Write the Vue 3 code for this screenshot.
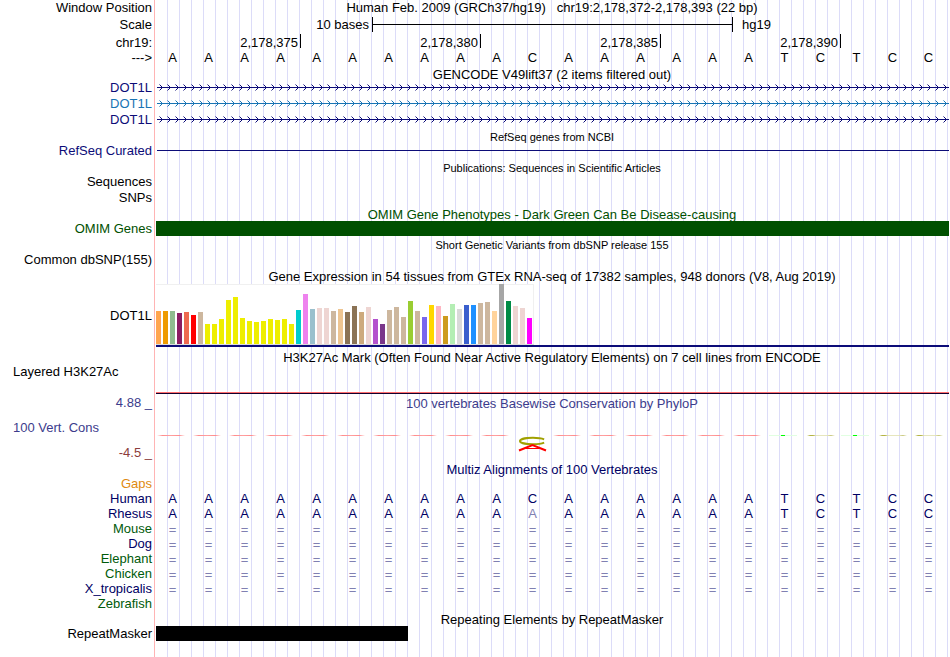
<script setup>
const bases = 'AAAAAAAAAACAAAAAATCTCC'.split('');
const rhesus = 'AAAAAAAAAAAAAAAAATCTCC'.split('');

const ticks = ['2,178,375', '2,178,380', '2,178,385', '2,178,390'];

const transcripts = [
    { name: 'DOT1L', color: 'navy' },
    { name: 'DOT1L', color: 'blue' },
    { name: 'DOT1L', color: 'navy' }
];

// one bar per GTEx tissue: [height, color]
const tissues = [
    [33, '#ffa54f'], [33, '#ee9a00'], [33, '#8fbc8f'], [31, '#8b1c62'], [32, '#ee6a50'], [29, '#ff0000'],
    [32, '#cdb79e'], [20, '#eeee00'], [20, '#eeee00'], [25, '#eeee00'], [44, '#eeee00'], [47, '#eeee00'],
    [26, '#eeee00'], [23, '#eeee00'], [22, '#eeee00'], [23, '#eeee00'], [25, '#eeee00'], [24, '#eeee00'],
    [25, '#eeee00'], [20, '#eeee00'], [34, '#00cdcd'], [50, '#ee82ee'], [35, '#9ac0cd'], [36, '#eed5d2'],
    [36, '#eed5d2'], [33, '#cdb79e'], [35, '#eec591'], [32, '#8b7355'], [38, '#8b7355'], [32, '#cdaa7d'],
    [37, '#eed5d2'], [25, '#b452cd'], [20, '#7a378b'], [34, '#cdb79e'], [37, '#cdb79e'], [27, '#cdb79e'],
    [43, '#9acd32'], [33, '#cdb79e'], [27, '#7a67ee'], [39, '#ffd700'], [38, '#ffb6c1'], [28, '#cd9b1d'],
    [40, '#b4eeb4'], [35, '#d9d9d9'], [39, '#3a5fcd'], [39, '#1e90ff'], [41, '#cdb79e'], [42, '#cdb79e'],
    [33, '#ffd39b'], [60, '#a6a6a6'], [43, '#008b45'], [38, '#eed5d2'], [36, '#eed5d2'], [26, '#ff00ff']
];

const species = [
    { name: 'Gaps', color: 'orange', seq: [] },
    { name: 'Human', color: 'darkblue', seq: bases },
    { name: 'Rhesus', color: 'darkblue', seq: rhesus },
    { name: 'Mouse', color: 'green', seq: bases.map(() => '=') },
    { name: 'Dog', color: 'darkblue', seq: bases.map(() => '=') },
    { name: 'Elephant', color: 'green', seq: bases.map(() => '=') },
    { name: 'Chicken', color: 'green', seq: bases.map(() => '=') },
    { name: 'X_tropicalis', color: 'darkblue', seq: bases.map(() => '=') },
    { name: 'Zebrafish', color: 'green', seq: [] }
];
</script>

<template>
    <main class="browser">
        <div class="row">
            <div class="label">Window Position</div>
            <div class="plot title top">Human Feb. 2009 (GRCh37/hg19) &nbsp; chr19:2,178,372-2,178,393 (22 bp)</div>
        </div>
        <div class="row scaleRow">
            <div class="label">Scale</div>
            <div class="plot cells">
                <span class="scaleText">10 bases</span>
                <span class="scaleBar"></span>
                <span class="assembly">hg19</span>
            </div>
        </div>
        <div class="row ruler">
            <div class="label">chr19:</div>
            <div class="plot cells">
                <span v-for="(tick, i) in ticks" :key="tick" class="tick" :class="{ first: i === 0 }">{{ tick }}</span>
            </div>
        </div>
        <div class="row">
            <div class="label">---&gt;</div>
            <div class="plot cells bases">
                <span v-for="(base, i) in bases" :key="i">{{ base }}</span>
            </div>
        </div>

        <div class="row short">
            <div class="label"></div>
            <div class="plot title">GENCODE V49lift37 (2 items filtered out)</div>
        </div>
        <div class="row" v-for="(item, i) in transcripts" :key="i" :class="item.color">
            <div class="label">{{ item.name }}</div>
            <div class="plot">
                <svg class="arrows" width="100%" height="16">
                    <defs>
                        <pattern :id="'chevron' + i" width="8" height="16" patternUnits="userSpaceOnUse">
                            <path d="M3.5 4.5l3 3l-3 3" fill="none" stroke="currentColor" stroke-width="1" />
                        </pattern>
                    </defs>
                    <rect x="1" y="7" width="100%" height="1" fill="currentColor" />
                    <rect x="1" width="100%" height="16" :fill="'url(#chevron' + i + ')'" />
                </svg>
            </div>
        </div>

        <div class="row medium">
            <div class="label"></div>
            <div class="plot title small">RefSeq genes from NCBI</div>
        </div>
        <div class="row navy">
            <div class="label">RefSeq Curated</div>
            <div class="plot"><div class="thinLine"></div></div>
        </div>

        <div class="row medium">
            <div class="label"></div>
            <div class="plot title small">Publications: Sequences in Scientific Articles</div>
        </div>
        <div class="row">
            <div class="label">Sequences</div>
            <div class="plot"></div>
        </div>
        <div class="row">
            <div class="label">SNPs</div>
            <div class="plot"></div>
        </div>

        <div class="row medium omim">
            <div class="label"></div>
            <div class="plot title">OMIM Gene Phenotypes - Dark Green Can Be Disease-causing</div>
        </div>
        <div class="row medium omim">
            <div class="label">OMIM Genes</div>
            <div class="plot"><div class="block"></div></div>
        </div>

        <div class="row tall">
            <div class="label"></div>
            <div class="plot title small">Short Genetic Variants from dbSNP release 155</div>
        </div>
        <div class="row">
            <div class="label">Common dbSNP(155)</div>
            <div class="plot"></div>
        </div>

        <div class="row medium">
            <div class="label"></div>
            <div class="plot title">Gene Expression in 54 tissues from GTEx RNA-seq of 17382 samples, 948 donors (V8, Aug 2019)</div>
        </div>
        <div class="row gtex">
            <div class="label">DOT1L</div>
            <div class="plot">
                <div class="bars">
                    <i v-for="(t, i) in tissues" :key="i" :style="{ height: t[0] + 'px', backgroundColor: t[1] }"></i>
                </div>
                <div class="geneModel"></div>
            </div>
        </div>

        <div class="row medium">
            <div class="label"></div>
            <div class="plot title top">H3K27Ac Mark (Often Found Near Active Regulatory Elements) on 7 cell lines from ENCODE</div>
        </div>
        <div class="row layered">
            <div class="label left">Layered H3K27Ac</div>
            <div class="plot"><div class="signal"></div></div>
        </div>

        <div class="row phylop">
            <div class="label">4.88 _</div>
            <div class="plot title">100 vertebrates Basewise Conservation by PhyloP</div>
        </div>
        <div class="row phylop cons">
            <div class="label consLabel">
                <span>100 Vert. Cons</span>
                <span class="min">-4.5 _</span>
            </div>
            <div class="plot cells">
                <template v-for="(base, i) in bases" :key="i">
                    <svg v-if="i === 10" class="logo" width="36" height="20" viewBox="0 0 36 20" fill="none">
                        <ellipse cx="17" cy="7" rx="13" ry="3.3" pathLength="100" stroke="#a0a000" stroke-width="2" stroke-dasharray="90 10" stroke-dashoffset="-5" />
                        <polyline points="3,16.5 16.5,11 30,16.5" stroke="#ff0000" stroke-width="2" />
                        <line x1="10" y1="14.5" x2="23" y2="14.5" stroke="#ff0000" />
                    </svg>
                    <span v-else class="dash" :class="'dash' + base"></span>
                </template>
            </div>
        </div>

        <div class="row medium darkblue">
            <div class="label"></div>
            <div class="plot title">Multiz Alignments of 100 Vertebrates</div>
        </div>
        <div class="row medium" v-for="s in species" :key="s.name" :class="s.color">
            <div class="label">{{ s.name }}</div>
            <div class="plot cells bases darkblue" :class="{ unaligned: s.seq[0] === '=' }">
                <span v-for="(base, i) in s.seq" :key="i" :class="{ faded: base !== bases[i] }">{{ base }}</span>
            </div>
        </div>

        <div class="row medium">
            <div class="label"></div>
            <div class="plot title">Repeating Elements by RepeatMasker</div>
        </div>
        <div class="row medium">
            <div class="label">RepeatMasker</div>
            <div class="plot cells"><div class="repeat"></div></div>
        </div>
        <div class="row rest">
            <div class="label"></div>
            <div class="plot"></div>
        </div>
    </main>
</template>

<style>
body {
    margin: 0;
    background-color: #fff;
}
</style>

<style scoped>
.browser {
    display: flex;
    flex-direction: column;
    min-height: 100vh;
    overflow: hidden;
    font-family: "Liberation Sans", Arial, sans-serif;
    font-size: 13px;
    line-height: 16px;
    color: #000;
}

.row {
    display: grid;
    grid-template-columns: 155px minmax(0, 1fr);
    height: 16px;
    flex-shrink: 0;
}

.row.short {
    height: 14px;
}

.row.medium {
    height: 15px;
    line-height: 15px;
}

.row.tall {
    height: 16px;
}

.row.scaleRow {
    height: 18px;
    line-height: 18px;
}

.row.ruler {
    line-height: 18px;
}

.row.rest {
    flex: 1;
    height: auto;
}

.label {
    border-right: 1px solid #ffb4b4;
    padding-right: 2px;
    text-align: right;
    white-space: nowrap;
}

.label.left {
    text-align: left;
    padding-left: 13px;
}

/* vertical guidelines, three per base */
.plot {
    margin-left: 1px;
    background-image: linear-gradient(to left, #dcdcf8 1px, transparent 1px);
    background-size: calc((100% - 2px) / 66) 100%;
    white-space: nowrap;
}

.title {
    padding-right: 2px;
    text-align: center;
    line-height: 18px;
}

.title.top {
    line-height: 16px;
}

.small {
    font-size: 11px;
}

.cells {
    display: grid;
    grid-template-columns: repeat(22, minmax(0, 1fr));
    padding-right: 2px;
}

.bases span {
    text-align: center;
    padding-right: 3px;
}

.unaligned {
    line-height: 17px;
}

.navy {
    color: #0c0c78;
}

.blue {
    color: #1874b4;
}

.darkblue {
    color: #000064;
}

.green {
    color: #005a0a;
}

.orange {
    color: #e08a10;
}

.omim {
    color: #005000;
}

.phylop {
    color: #3c3c8c;
}

.faded {
    color: #8080b2;
}

.scaleText {
    grid-column: 1 / 7;
    text-align: right;
    padding-right: 3px;
}

.scaleBar {
    grid-column: 7 / 17;
    height: 15px;
    margin: 1px -1px 0 0;
    box-sizing: border-box;
    border: solid #000;
    border-width: 0 1px;
    background: linear-gradient(#000, #000) 0 7px / 100% 1px no-repeat;
}

.assembly {
    grid-column: 17 / 22;
    padding-left: 10px;
}

.tick {
    grid-column: span 5;
    height: 14px;
    margin-right: -1px;
    padding-right: 2px;
    border-right: 1px solid #000;
    text-align: right;
}

.tick.first {
    grid-column: span 4;
}

.arrows {
    display: block;
    width: calc(100% - 1px);
}

.thinLine {
    height: 1px;
    margin: 7px 1px 0;
    background-color: currentColor;
}

.block {
    height: 15px;
    margin-right: 1px;
    background-color: currentColor;
}

.repeat {
    grid-column: 1 / 8;
    background-color: #000;
}

.row.gtex {
    height: 66px;
    padding-top: 1px;
    line-height: 64px;
}

.bars {
    display: flex;
    align-items: flex-end;
    gap: 2px;
    width: 378px;
    height: 61px;
    box-sizing: border-box;
    border-bottom: 1px solid #dcdcdc;
    background-color: #fff;
    box-shadow: inset 0 1px #f0f0f0, inset -1px 0 #f0f0f0;
}

.bars i {
    width: 5px;
}

.geneModel {
    height: 2px;
    margin-right: 1px;
    background-color: #0c0c78;
}

.row.layered {
    height: 30px;
    line-height: 14px;
}

.signal {
    height: 1px;
    margin: 27px 1px 0 0;
    border-top: 1px solid #ff6e6e;
    background-color: #14002d;
}

.row.cons {
    height: 50px;
}

.consLabel {
    display: flex;
    flex-direction: column;
    justify-content: space-between;
    padding-top: 9px;
    padding-left: 13px;
    text-align: left;
}

.min {
    text-align: right;
    color: #8c3c3c;
}

.dash {
    height: 1px;
    margin: 24px 7px 0 1px;
}

.dashA {
    background: linear-gradient(to right, #ff8c8c00, #ff8c8c 20%, #ffa0a0 50%, #ff8c8c 80%, #ff8c8c00);
}

.dashT {
    background: linear-gradient(to right, #e1ffe1 12px, #00ff00 12px, #00ff00 16px, #e1ffe1 16px);
}

.dashC {
    margin: 24px 5px 0 3px;
    background: linear-gradient(to right, #b4b44600, #b4b446 3px, #b4b446 6px, #e6e6be 9px, #e6e6be 20px, #c8c87d 24px, #c8c87d00);
}

.logo {
    margin-top: 23px;
}
</style>
